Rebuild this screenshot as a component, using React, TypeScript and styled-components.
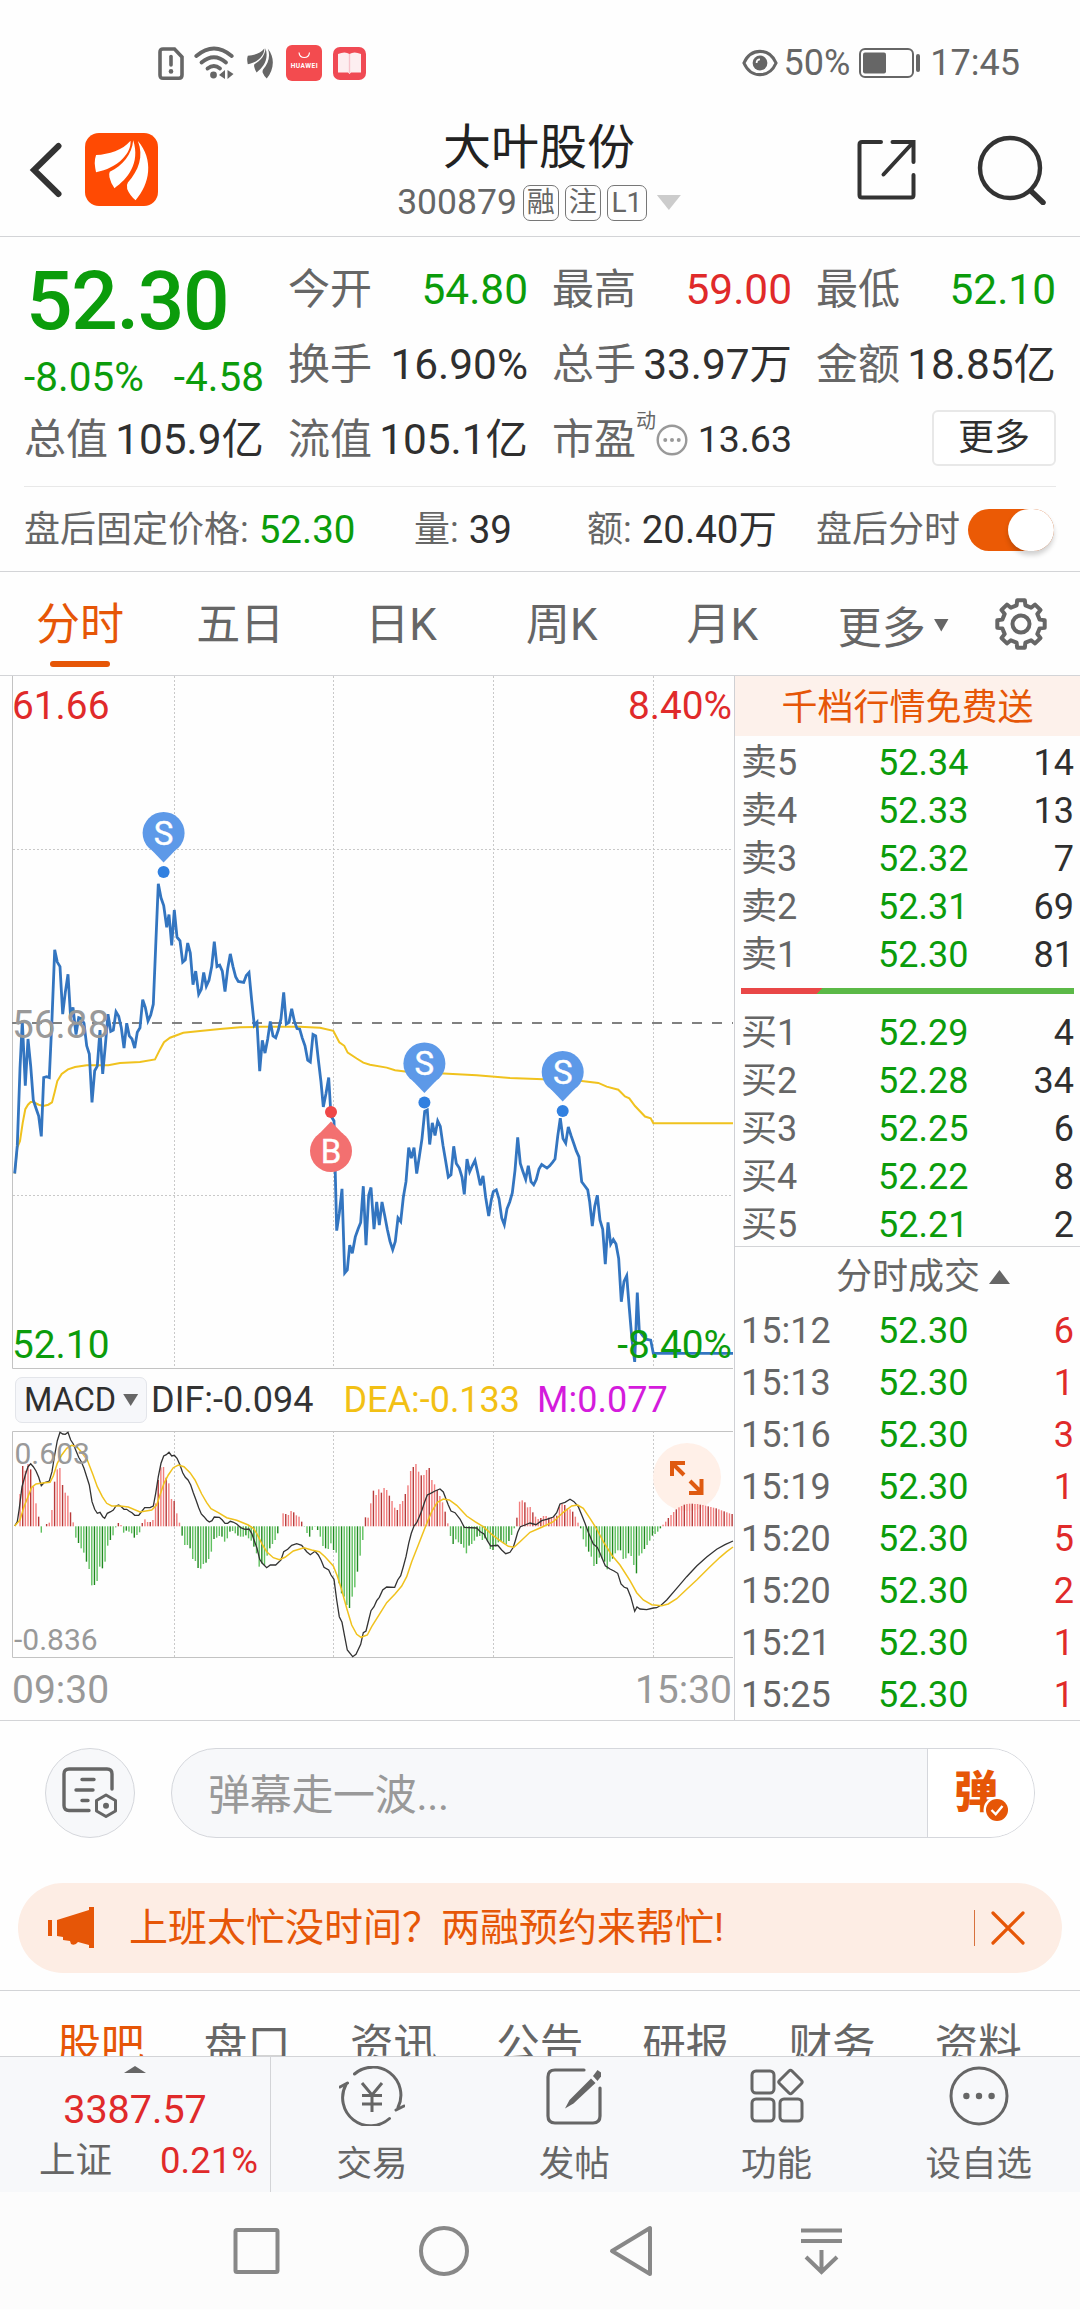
import React from "react";
import styled, { createGlobalStyle } from "styled-components";

const FONT = `Roboto, "Noto Sans CJK SC", "Noto Sans", sans-serif`;
const C = {
  green: "#0b9c0b",
  red: "#e02a2a",
  orange: "#e65607",
  gray: "#666666",
  light: "#999999",
  dark: "#2f2f2f",
  line: "#d3d4d7",
  blue: "#3375c0",
  yellow: "#f0c21e",
};

const GlobalStyle = createGlobalStyle`
  html, body { margin: 0; padding: 0; background: #fff; }
  body { width: 1080px; height: 2310px; overflow: hidden; }
  * { box-sizing: border-box; }
`;

const Screen = styled.div`
  width: 1080px;
  height: 2310px;
  overflow: hidden;
  display: flex;
  flex-direction: column;
  background: #fefefe;
  font-family: ${FONT};
  color: ${C.dark};
  white-space: nowrap;
  & > * {
    flex-shrink: 0;
  }
`;

/* ---------- status bar ---------- */
const StatusBar = styled.div`
  height: 119px;
  padding: 7px 60px 0 158px;
  display: flex;
  align-items: center;
  justify-content: space-between;
  color: ${C.gray};
  font-size: 36px;
  line-height: 40px;
`;
const StatusIcons = styled.div`
  display: flex;
  align-items: center;
`;
const StatusInfo = styled.div`
  display: flex;
  align-items: center;
  height: 40px;
`;
const Gap = styled.span<{ $w: number }>`
  width: ${(p) => p.$w}px;
  flex: none;
`;

/* ---------- header ---------- */
const Header = styled.div`
  height: 118px;
  border-bottom: 1px solid ${C.line};
  display: grid;
  grid-template-columns: 1fr auto 1fr;
  padding: 0 33px 0 29px;
`;
const HeaderSide = styled.div<{ $end?: boolean }>`
  display: flex;
  height: 101px;
  align-items: center;
  justify-content: ${(p) => (p.$end ? "flex-end" : "flex-start")};
`;
const TitleBlock = styled.div`
  display: flex;
  flex-direction: column;
  align-items: center;
  padding-left: 2px;
`;
const Title = styled.div`
  font-size: 48px;
  line-height: 57px;
  color: #222;
`;
const SubTitle = styled.div`
  height: 53px;
  display: flex;
  align-items: center;
  font-size: 35.5px;
  line-height: 53px;
  color: ${C.gray};
`;
const Tag = styled.span<{ $w?: number }>`
  width: ${(p) => p.$w || 36}px;
  height: 36px;
  margin-left: 6px;
  border: 1.5px solid #777;
  border-radius: 7px;
  font-size: 28px;
  line-height: 34px;
  text-align: center;
`;
const Triangle = styled.span<{ $w: number; $h: number; $color: string; $up?: boolean; $ml?: number }>`
  flex: none;
  width: ${(p) => p.$w}px;
  height: ${(p) => p.$h}px;
  margin-left: ${(p) => p.$ml || 0}px;
  background: ${(p) => p.$color};
  clip-path: ${(p) => (p.$up ? "polygon(50% 0, 100% 100%, 0 100%)" : "polygon(0 0, 100% 0, 50% 100%)")};
`;

/* ---------- quote ---------- */
const Quote = styled.div`
  height: 250px;
  margin: 0 24px;
  padding-top: 15px;
  border-bottom: 1px solid #e8e8e8;
  display: grid;
  grid-template-columns: repeat(4, 240px);
  grid-template-rows: repeat(3, 75px);
  column-gap: 24px;
`;
const PriceCell = styled.div`
  grid-row: span 2;
  color: ${C.green};
`;
const BigPrice = styled.div`
  padding-left: 2px;
  font-size: 82px;
  font-weight: 500;
  line-height: 98px;
  letter-spacing: -1.4px;
`;
const Change = styled.div`
  display: flex;
  justify-content: space-between;
  font-size: 40.5px;
  line-height: 54px;
`;
const Cell = styled.div`
  display: flex;
  align-items: center;
  justify-content: space-between;
  font-size: 42px;
  line-height: 75px;
`;
const Label = styled.span`
  color: ${C.gray};
`;
const Value = styled.span<{ $color?: string; $size?: number }>`
  color: ${(p) => p.$color || C.dark};
  font-size: ${(p) => (p.$size ? `${p.$size}px` : "inherit")};
`;
const PeLabel = styled.span`
  display: flex;
  align-items: center;
  color: ${C.gray};
`;
const PeSup = styled.span`
  margin: 0 0 38px 0;
  font-size: 20px;
  line-height: 24px;
`;
const MoreButton = styled.button`
  width: 124px;
  height: 56px;
  margin: 0 0 3px auto;
  padding: 0;
  border: 2px solid #e8e8e8;
  border-radius: 6px;
  background: #fff;
  font-family: inherit;
  font-size: 36px;
  line-height: 52px;
  color: ${C.dark};
`;
const AfterHours = styled.div`
  height: 85px;
  border-bottom: 1px solid ${C.line};
  padding: 1px 24px 0;
  display: grid;
  grid-template-columns: 390px 173px 229px 1fr;
  align-items: center;
  font-size: 36px;
  line-height: 82px;
`;
const AfterItem = styled.div<{ $gap?: number }>`
  display: flex;
  align-items: center;
  gap: ${(p) => p.$gap || 10}px;
`;
const Toggle = styled.span`
  width: 86px;
  height: 42px;
  border-radius: 21px;
  background: linear-gradient(90deg, #eb5a05 55%, #c94d05);
  display: flex;
  justify-content: flex-end;
`;
const Knob = styled.span`
  width: 46px;
  height: 42px;
  border-radius: 21px;
  background: #fff;
  box-shadow: 0 4px 5px rgba(0, 0, 0, 0.18);
`;

/* ---------- period tabs ---------- */
const PeriodTabs = styled.div`
  height: 104px;
  border-bottom: 1px solid ${C.line};
  display: flex;
  font-size: 44px;
  color: ${C.gray};
`;
const PeriodTab = styled.div<{ $active?: boolean }>`
  flex: none;
  width: ${(p) => (p.$active ? 160 : 160.7)}px;
  display: flex;
  flex-direction: column;
  align-items: center;
  line-height: 88px;
  padding-top: 9px;
  color: ${(p) => (p.$active ? C.orange : "inherit")};
`;
const Underline = styled.span`
  width: 60px;
  height: 6px;
  margin-top: -8px;
  border-radius: 3px;
  background: ${C.orange};
`;
const PeriodMore = styled.div`
  flex: none;
  display: flex;
  align-items: center;
  margin-left: 35px;
  padding-top: 3px;
  width: 157px;
`;
const PeriodSettings = styled.div`
  display: flex;
  align-items: center;
`;

/* ---------- chart + order book ---------- */
const Main = styled.div`
  height: 1045px;
  border-bottom: 1px solid ${C.line};
  display: flex;
  overflow: hidden;
`;
const ChartPane = styled.div`
  width: 735px;
  border-right: 1px solid #cfd0d4;
  display: flex;
  flex-direction: column;
`;
const Plot = styled.svg`
  display: block;
  flex: none;
  font-family: ${FONT};
`;
const IndicatorBar = styled.div`
  height: 62px;
  padding: 0 0 0 15px;
  display: flex;
  align-items: center;
  font-size: 36px;
  line-height: 42px;
`;
const IndicatorButton = styled.div`
  width: 132px;
  height: 46px;
  border: 1px solid #e3e5ea;
  border-radius: 7px;
  background: #f6f7fa;
  padding-left: 8px;
  display: flex;
  align-items: center;
  font-size: 32.5px;
`;
const IndicatorValue = styled.span<{ $color: string; $ml: number }>`
  margin-left: ${(p) => p.$ml}px;
  color: ${(p) => p.$color};
`;
const TimeAxis = styled.div`
  height: 62px;
  padding: 0 2px 0 12px;
  display: flex;
  justify-content: space-between;
  font-size: 39px;
  line-height: 65px;
  color: ${C.light};
`;
const Book = styled.div`
  flex: 1;
  display: flex;
  flex-direction: column;
  font-size: 36px;
  & > * {
    flex-shrink: 0;
  }
`;
const BookBanner = styled.div`
  height: 60px;
  background: #fdf1eb;
  color: ${C.orange};
  text-align: center;
  line-height: 65px;
`;
const BookRows = styled.div<{ $pt: number }>`
  padding-top: ${(p) => p.$pt}px;
`;
const BookRow = styled.div<{ $h: number }>`
  height: ${(p) => p.$h}px;
  line-height: ${(p) => p.$h}px;
  padding: 0 6px;
  display: grid;
  grid-template-columns: 137px 1fr auto;
`;
const RatioBar = styled.div`
  margin: 9px 6px 15px;
  height: 6px;
  background: linear-gradient(135deg, #e94747 0, #e94747 57.5px, #5bb947 58px);
`;
const TradesHead = styled.div`
  height: 59px;
  margin-top: -3px;
  border-top: 1px solid ${C.line};
  padding: 2px 0 0 101px;
  display: flex;
  align-items: center;
  line-height: 56px;
  color: ${C.gray};
`;

/* ---------- danmaku + banner ---------- */
const DanmakuRow = styled.div`
  padding: 27px 45px 0;
  display: flex;
  gap: 36px;
`;
const RoundButton = styled.div`
  width: 90px;
  height: 90px;
  border: 1px solid #d5d7dc;
  border-radius: 45px;
  background: #f7f8fa;
  display: flex;
  align-items: center;
  justify-content: center;
`;
const DanmakuInput = styled.div`
  width: 864px;
  height: 90px;
  border: 1px solid #d5d7dc;
  border-radius: 45px;
  background: #f7f8fa;
  overflow: hidden;
  display: flex;
`;
const Placeholder = styled.div`
  flex: 1;
  padding-left: 36px;
  font-size: 42px;
  letter-spacing: -0.3px;
  line-height: 93px;
  color: ${C.light};
`;
const DanmakuToggle = styled.div`
  position: relative;
  width: 107px;
  border-left: 1px solid #d5d7dc;
  background: #fff;
  padding-left: 26px;
  font-size: 44px;
  font-weight: 900;
  line-height: 88px;
  color: ${C.orange};
`;
const CheckBadge = styled.svg`
  position: absolute;
  left: 55px;
  top: 47px;
`;
const PromoBanner = styled.div`
  height: 90px;
  margin: 45px 18px 17px;
  padding: 0 37px 0 30px;
  border-radius: 45px;
  background: #fdede4;
  display: flex;
  align-items: center;
  font-size: 39px;
  line-height: 94px;
  color: ${C.orange};
`;
const PromoText = styled.span`
  flex: 1;
  margin-left: 33px;
`;
const PromoDivider = styled.span`
  width: 1px;
  height: 36px;
  background: #d8713d;
  margin-right: 16px;
`;

/* ---------- section tabs ---------- */
const SectionTabs = styled.div`
  height: 66px;
  overflow: hidden;
  border-top: 1px solid ${C.line};
  padding: 19px 28px 0;
  display: grid;
  grid-template-columns: repeat(7, 146.2px);
  font-size: 43.5px;
  line-height: 72px;
  text-align: center;
  color: ${C.gray};
`;
const SectionTab = styled.span<{ $active?: boolean }>`
  color: ${(p) => (p.$active ? C.orange : "inherit")};
`;

/* ---------- bottom bar ---------- */
const BottomBar = styled.div`
  height: 136px;
  border-top: 1px solid ${C.line};
  background: #f7f8fa;
  display: grid;
  grid-template-columns: 271px repeat(4, 1fr);
`;
const IndexCell = styled.div`
  border-right: 1px solid ${C.line};
  padding-top: 9px;
  display: flex;
  flex-direction: column;
  align-items: center;
  color: ${C.red};
`;
const IndexValue = styled.div`
  margin-top: 11px;
  font-size: 39.5px;
  line-height: 52px;
`;
const IndexRow = styled.div`
  width: 100%;
  padding: 0 12px 0 39px;
  display: flex;
  justify-content: space-between;
  font-size: 36.5px;
  line-height: 49px;
`;
const Action = styled.div`
  display: flex;
  flex-direction: column;
  align-items: center;
  padding-top: 9px;
  font-size: 35.5px;
  line-height: 76px;
  color: ${C.gray};
`;
const SystemNav = styled.div`
  height: 117px;
  padding: 0 228px 0 227px;
  background: #fcfcfc;
  display: flex;
  align-items: center;
  justify-content: space-between;
`;

/* ---------- icons ---------- */
const feathers = [
  "M136 23 C112 52 72 63 33 66 Q29 78 29 90 Q30 104 33 117 C64 110 92 99 113 76 C128 60 137 44 136 23Z",
  "M144 22 C140 65 113 97 74 116 Q71 122 73 132 Q77 150 88 165 C126 138 166 92 144 22Z",
  "M158 24 C176 70 160 112 128 148 Q123 156 126 167 Q133 185 151 201 C194 152 206 80 158 24Z",
];
const AppLogo = () => (
  <svg width="73" height="73" viewBox="0 0 218 218">
    <rect width="218" height="218" rx="42" fill="#ff4a03" />
    {feathers.map((d) => (
      <path key={d} d={d} fill="#fff" />
    ))}
  </svg>
);
const SimIcon = () => (
  <svg width="26" height="33" viewBox="0 0 26 33" fill="none" stroke={C.gray} strokeWidth="3.6">
    <path d="M5 2 H16.5 L24 10 V28 Q24 31.2 21 31.2 H5 Q2 31.2 2 28 V5 Q2 2 5 2Z" />
    <path d="M13 9.5 V18" strokeLinecap="round" />
    <circle cx="13" cy="24.4" r="2.3" fill={C.gray} stroke="none" />
  </svg>
);
const WifiIcon = () => (
  <svg width="40" height="34" viewBox="0 0 40 34" fill="none" stroke={C.gray} strokeWidth="3.8" strokeLinecap="round">
    <path d="M2.3 10 Q20 -5 37.7 10" />
    <path d="M7.5 16.5 Q20 6 32 16.5" />
    <path d="M13.5 22.5 Q20 17.5 26 22.5" />
    <circle cx="19.5" cy="29" r="3.4" fill={C.gray} stroke="none" />
    <path d="M31 24 V33 L25 29Z M33.5 33 V24 L39.5 28Z" fill={C.gray} stroke="none" />
  </svg>
);
const FeatherIcon = () => (
  <svg width="26" height="31" viewBox="28 20 162 184" preserveAspectRatio="none">
    {feathers.map((d) => (
      <path key={d} d={d} fill={C.gray} />
    ))}
  </svg>
);
const StoreIcon = () => (
  <svg width="36" height="36" viewBox="0 0 36 36">
    <rect width="36" height="36" rx="6" fill="#f34b4f" />
    <path d="M13 7.5 Q13.5 12.5 18.3 12.5 Q23 12.5 23.5 7.5" fill="none" stroke="#fff" strokeWidth="1.2" />
    <text x="18.2" y="23" fill="#fff" fontSize="6.6" fontWeight="700" textAnchor="middle" textLength="27" fontFamily="Roboto">
      HUAWEI
    </text>
  </svg>
);
const BookIcon = () => (
  <svg width="33" height="33" viewBox="0 0 33 33">
    <rect width="33" height="33" rx="7" fill="#f04a54" />
    <path d="M5 7 Q12 4 16.5 7 Q21 4 28 7 V25.5 H18 L16.5 27 L15 25.5 H5Z" fill="#fdeef0" />
    <path d="M16.5 7 V26" stroke="#f6c4cc" strokeWidth="1.4" />
  </svg>
);
const EyeIcon = () => (
  <svg width="36" height="28" viewBox="0 0 37 28" fill="none" stroke={C.gray} strokeWidth="3.2">
    <path d="M2 14 C9 -2 28 -2 35 14 C28 30 9 30 2 14Z" />
    <circle cx="18.5" cy="14" r="7.6" fill={C.gray} stroke="none" />
    <path d="M15 14 Q15 10.5 18.5 10.3" stroke="#fff" strokeWidth="1.8" />
  </svg>
);
const BatteryIcon = () => (
  <svg width="61" height="30" viewBox="0 0 61 30">
    <rect x="1" y="1" width="53" height="28" rx="5" fill="none" stroke={C.gray} strokeWidth="2" />
    <rect x="4" y="4.5" width="23" height="21" rx="2" fill={C.gray} />
    <rect x="57" y="6" width="4" height="18" rx="2" fill={C.gray} />
  </svg>
);
const BackIcon = () => (
  <svg width="34" height="56" viewBox="0 0 34 56" fill="none" stroke="#333" strokeWidth="6" strokeLinecap="round">
    <path d="M29.5 4 L5 28 L29.5 52" />
  </svg>
);
const ShareIcon = () => (
  <svg width="60" height="62" viewBox="0 0 60 62" fill="none" stroke="#333" strokeWidth="4" strokeLinecap="round">
    <path d="M24 3 H5 Q2.5 3 2.5 5.5 V56 Q2.5 58.5 5 58.5 H54 Q56.5 58.5 56.5 56 V36" />
    <path d="M35.5 3 H56.5 V23 M56 3.5 L26.5 35.5" />
  </svg>
);
const SearchIcon = () => (
  <svg width="70" height="70" viewBox="0 0 70 70" fill="none" stroke="#333" strokeWidth="4.4" strokeLinecap="round">
    <circle cx="33" cy="33" r="30" />
    <path d="M54 56 L66 67.5" strokeWidth="5.5" />
  </svg>
);
const DotsCircle = ({ size, sw, r, color }: { size: number; sw: number; r: number; color: string }) => (
  <svg width={size} height={size} viewBox={`0 0 ${size} ${size}`}>
    <circle cx={size / 2} cy={size / 2} r={size / 2 - sw / 2 - 0.5} fill="none" stroke={color} strokeWidth={sw} />
    {[-1, 0, 1].map((k) => (
      <circle key={k} cx={size / 2 + k * size * 0.21} cy={size / 2} r={r} fill={color} />
    ))}
  </svg>
);
const gearPath = (() => {
  const pts: string[] = [];
  for (let i = 0; i < 8; i++) {
    const a = (i * Math.PI) / 4 - Math.PI / 2;
    [
      [-0.23, 19.2],
      [-0.16, 24.0],
      [0.16, 24.0],
      [0.23, 19.2],
    ].forEach(([d, r]) => pts.push(`${(26 + r * Math.cos(a + d)).toFixed(2)} ${(26 + r * Math.sin(a + d)).toFixed(2)}`));
  }
  return `M${pts.join("L")}Z`;
})();
const GearIcon = () => (
  <svg width="52" height="52" viewBox="0 0 52 52" fill="none" stroke={C.gray} strokeWidth="4" strokeLinejoin="round">
    <path d={gearPath} />
    <circle cx="26" cy="26" r="8.5" />
  </svg>
);
const ListSettingIcon = () => (
  <svg width="56" height="52" viewBox="0 0 56 52" fill="none" stroke={C.gray} strokeWidth="3.4" strokeLinecap="round">
    <path d="M27 43.5 H7 Q2 43.5 2 38.5 V7 Q2 2 7 2 H45 Q50 2 50 7 V22" />
    <path d="M20 12.5 H32 M14 23 H31 M20 33.5 H26" />
    <path d="M44 28 L53.5 33.5 V44 L44 49.5 L34.5 44 V33.5Z" strokeLinejoin="round" strokeWidth="3" />
    <circle cx="44" cy="38.7" r="3" fill={C.gray} stroke="none" />
  </svg>
);
const MegaphoneIcon = () => (
  <svg width="48" height="42" viewBox="0 0 48 42" fill={C.orange}>
    <rect x="0" y="13" width="4" height="16" />
    <path d="M9 13 L41 3 V0 H46 V41 H41 V38 L30 35 Q27 39 23 37 L22 34 L15 33 V30 L9 29Z" />
  </svg>
);
const CloseIcon = () => (
  <svg width="34" height="34" viewBox="0 0 34 34" stroke={C.orange} strokeWidth="3.2" strokeLinecap="round">
    <path d="M2 2 L32 32 M32 2 L2 32" />
  </svg>
);
const TradeIcon = () => (
  <svg width="66" height="60" viewBox="0 0 66 60" fill="none" stroke={C.gray} strokeWidth="3">
    <path d="M15.5 8 A28 28 0 0 1 59 41.5" strokeLinecap="round" />
    <path d="M50.5 52.5 A28 28 0 0 1 7 18.5" strokeLinecap="round" />
    <path d="M57 44 L65 40 M1 21 L8.5 17" strokeLinecap="round" />
    <path d="M23 17 L33 29 L43 17 M33 29 V46 M23 29.5 H43 M23 38 H43" />
  </svg>
);
const PostIcon = () => (
  <svg width="56" height="60" viewBox="0 0 56 60" fill="none" stroke={C.gray} strokeWidth="3.2">
    <path d="M38 4 H9 Q2 4 2 11 V50 Q2 57 9 57 H47 Q54 57 54 50 V22" strokeLinecap="round" />
    <path d="M45 12.500 L49.500 17 L27.500 37.500 L19 42.500 L23.500 34Z" fill={C.gray} stroke="none" />
    <path d="M47 10 L51.5 4 L55 6.5 L55 10.500 L51.5 15Z" fill={C.gray} stroke="none" />
  </svg>
);
const AppsIcon = () => (
  <svg width="54" height="60" viewBox="0 0 54 60" fill="none" stroke={C.gray} strokeWidth="3">
    <rect x="2" y="5" width="22" height="22" rx="4" />
    <rect x="2" y="33" width="22" height="22" rx="4" />
    <rect x="30" y="33" width="22" height="22" rx="4" />
    <path d="M39 5 Q40.5 3.5 42 5 L51.5 14.5 Q53 16 51.5 17.5 L42 27 Q40.5 28.5 39 27 L29.5 17.5 Q28 16 29.5 14.5Z" />
  </svg>
);

/* ---------- chart data (plot units: 3 per pixel across) ---------- */
const price = [
  44, 1112, 52, 1050, 60, 880, 67, 775, 76, 918, 84, 815, 92, 875, 100, 950, 108, 968, 116, 985, 124, 1030, 131, 900, 140, 898,
  148, 900, 156, 770, 164, 618, 172, 645, 180, 655, 188, 760, 196, 712, 204, 672, 212, 770, 219, 745, 228, 805, 236, 768, 244,
  770, 252, 780, 260, 830, 268, 848, 276, 955, 284, 885, 292, 875, 300, 795, 308, 892, 316, 830, 324, 760, 332, 798, 340, 795,
  348, 755, 356, 765, 364, 790, 372, 835, 380, 780, 388, 808, 396, 815, 404, 835, 412, 800, 420, 790, 428, 728, 436, 745, 444,
  775, 452, 762, 460, 738, 467, 610, 475, 472, 483, 503, 491, 520, 500, 568, 507, 540, 515, 608, 523, 530, 531, 590, 540, 598,
  548, 645, 556, 640, 563, 603, 571, 625, 579, 695, 587, 665, 596, 716, 604, 705, 611, 668, 619, 698, 627, 685, 635, 655, 643,
  600, 651, 655, 659, 652, 667, 665, 675, 710, 683, 660, 691, 627, 699, 655, 707, 678, 715, 688, 731, 690, 739, 675, 747, 668,
  755, 730, 763, 785, 771, 778, 779, 886, 787, 818, 795, 846, 803, 815, 811, 776, 819, 808, 827, 812, 835, 795, 843, 770, 851,
  712, 859, 782, 867, 778, 875, 748, 883, 775, 891, 792, 899, 793, 907, 813, 915, 830, 923, 862, 931, 866, 939, 805, 947, 808,
  955, 860, 963, 910, 970, 965, 978, 935, 986, 900, 993, 985, 1002, 996, 1010, 1238, 1018, 1200, 1026, 1146, 1034, 1332, 1042,
  1325, 1049, 1270, 1057, 1288, 1066, 1252, 1074, 1235, 1082, 1220, 1090, 1140, 1098, 1270, 1106, 1160, 1113, 1143, 1122, 1235,
  1130, 1175, 1138, 1226, 1146, 1175, 1154, 1205, 1162, 1235, 1170, 1262, 1178, 1280, 1186, 1262, 1194, 1210, 1202, 1218, 1210,
  1165, 1218, 1130, 1226, 1055, 1234, 1078, 1242, 1055, 1250, 1112, 1258, 1075, 1266, 1035, 1274, 975, 1282, 972, 1289, 1048,
  1297, 1000, 1305, 1028, 1313, 996, 1321, 1008, 1329, 1050, 1337, 1085, 1345, 1120, 1353, 1115, 1361, 1052, 1369, 1090, 1378,
  1100, 1386, 1120, 1393, 1158, 1401, 1080, 1409, 1108, 1417, 1095, 1425, 1083, 1433, 1110, 1441, 1138, 1449, 1117, 1457, 1165,
  1466, 1206, 1474, 1170, 1480, 1152, 1489, 1148, 1497, 1168, 1505, 1210, 1513, 1225, 1521, 1190, 1529, 1175, 1537, 1155, 1545,
  1105, 1553, 1032, 1561, 1090, 1569, 1108, 1577, 1125, 1585, 1095, 1593, 1130, 1601, 1137, 1609, 1125, 1617, 1102, 1625, 1092,
  1641, 1100, 1649, 1095, 1657, 1088, 1665, 1080, 1673, 1030, 1681, 990, 1689, 1035, 1697, 1045, 1705, 1009, 1713, 1028, 1721,
  1045, 1729, 1062, 1737, 1075, 1745, 1130, 1753, 1138, 1763, 1148, 1769, 1175, 1777, 1228, 1784, 1185, 1792, 1160, 1800, 1215,
  1808, 1235, 1816, 1312, 1824, 1220, 1832, 1268, 1840, 1258, 1848, 1268, 1856, 1300, 1864, 1395, 1872, 1350, 1880, 1338, 1888,
  1410, 1896, 1480, 1904, 1528, 1912, 1375, 1918, 1460, 1928, 1470, 1938, 1478, 1952, 1480, 1960, 1509, 2199, 1509,
];
const average = [
  44, 1112, 52, 1055, 60, 1040, 68, 1000, 76, 970, 84, 960, 92, 954, 100, 954, 116, 960, 130, 963, 145, 960, 156, 955, 164, 932,
  172, 908, 185, 892, 204, 882, 225, 877, 260, 873, 325, 873, 360, 868, 420, 866, 465, 860, 480, 838, 492, 822, 510, 812, 550,
  801, 600, 797, 660, 793, 720, 789, 780, 788, 900, 788, 960, 790, 1000, 797, 1018, 822, 1033, 830, 1043, 845, 1070, 858, 1090,
  867, 1110, 872, 1160, 878, 1185, 884, 1240, 889, 1330, 891, 1430, 895, 1530, 901, 1630, 904, 1680, 906, 1745, 908, 1795, 912,
  1820, 920, 1855, 927, 1875, 942, 1888, 946, 1905, 963, 1935, 986, 1952, 990, 1960, 1001, 2199, 1001,
];
const dif = [
  44, 468, 52, 455, 58, 415, 66, 350, 76, 315, 84, 290, 92, 281, 100, 290, 108, 303, 116, 322, 124, 347, 132, 338, 148, 333,
  156, 305, 164, 255, 172, 212, 180, 187, 188, 192, 196, 193, 204, 187, 212, 210, 220, 222, 228, 242, 236, 262, 244, 275, 252,
  295, 260, 320, 268, 345, 276, 395, 284, 418, 292, 430, 300, 427, 308, 440, 314, 445, 322, 430, 332, 425, 340, 420, 348, 408,
  356, 405, 364, 410, 372, 418, 380, 418, 388, 424, 396, 428, 404, 436, 416, 436, 424, 426, 434, 413, 450, 413, 460, 408, 467,
  370, 475, 320, 483, 280, 491, 258, 499, 254, 507, 247, 515, 258, 523, 256, 531, 265, 540, 285, 548, 308, 556, 322, 564, 330,
  572, 345, 580, 368, 588, 390, 596, 413, 604, 432, 612, 440, 620, 450, 628, 456, 636, 452, 643, 441, 658, 442, 667, 450, 675,
  460, 683, 460, 691, 454, 699, 456, 710, 462, 722, 473, 735, 478, 747, 477, 755, 490, 763, 512, 771, 535, 779, 568, 787, 580,
  800, 593, 811, 585, 827, 585, 843, 570, 851, 545, 863, 538, 875, 526, 890, 521, 905, 526, 920, 545, 931, 554, 945, 544, 955,
  555, 963, 570, 972, 592, 986, 600, 993, 615, 1002, 628, 1010, 690, 1018, 740, 1026, 757, 1034, 800, 1042, 840, 1058, 860,
  1068, 853, 1082, 823, 1090, 788, 1098, 783, 1106, 750, 1113, 722, 1122, 710, 1130, 692, 1138, 682, 1148, 660, 1160, 651, 1184,
  652, 1193, 630, 1202, 617, 1210, 590, 1218, 560, 1226, 520, 1234, 490, 1242, 468, 1250, 458, 1258, 440, 1266, 420, 1274, 395,
  1282, 375, 1292, 370, 1305, 363, 1320, 357, 1330, 366, 1337, 385, 1345, 405, 1353, 423, 1365, 428, 1380, 447, 1393, 472, 1430,
  474, 1441, 485, 1452, 492, 1462, 512, 1472, 528, 1493, 526, 1505, 540, 1517, 551, 1530, 547, 1540, 532, 1546, 512, 1553, 487,
  1561, 470, 1575, 465, 1590, 459, 1608, 464, 1625, 452, 1640, 448, 1660, 441, 1670, 428, 1680, 402, 1695, 397, 1710, 388, 1722,
  395, 1735, 410, 1745, 435, 1755, 460, 1765, 487, 1780, 522, 1792, 532, 1800, 550, 1816, 587, 1830, 597, 1842, 603, 1853, 610,
  1863, 642, 1873, 652, 1882, 655, 1892, 680, 1904, 724, 1911, 711, 1920, 717, 1940, 719, 1960, 714, 1970, 713, 1984, 705, 2000,
  690, 2030, 655, 2060, 620, 2090, 588, 2120, 561, 2150, 538, 2175, 524, 2199, 513,
];
const dea = [
  44, 468, 60, 450, 72, 410, 84, 380, 95, 352, 108, 342, 128, 339, 150, 337, 160, 318, 172, 280, 185, 255, 200, 235, 215, 226,
  230, 230, 245, 247, 262, 270, 278, 312, 292, 350, 307, 380, 320, 400, 335, 408, 360, 408, 385, 411, 420, 426, 455, 420, 470,
  405, 480, 375, 492, 340, 505, 315, 520, 293, 535, 285, 552, 290, 570, 308, 585, 330, 605, 372, 620, 398, 633, 416, 655, 428,
  680, 443, 710, 451, 745, 465, 760, 475, 770, 490, 785, 520, 800, 545, 820, 563, 838, 569, 855, 562, 880, 543, 912, 533, 935,
  540, 958, 545, 975, 560, 1000, 588, 1012, 618, 1025, 660, 1040, 715, 1055, 765, 1070, 793, 1083, 802, 1102, 795, 1115, 770,
  1140, 730, 1160, 698, 1185, 672, 1205, 648, 1220, 620, 1235, 575, 1255, 525, 1275, 473, 1295, 425, 1312, 397, 1330, 387, 1348,
  390, 1370, 406, 1400, 438, 1425, 455, 1450, 470, 1475, 493, 1500, 512, 1525, 529, 1542, 532, 1560, 515, 1590, 487, 1625, 472,
  1660, 455, 1690, 427, 1715, 408, 1733, 405, 1750, 415, 1770, 445, 1790, 477, 1810, 515, 1835, 555, 1860, 585, 1890, 632, 1910,
  668, 1930, 690, 1955, 704, 1985, 707, 2005, 702, 2030, 686, 2060, 658, 2090, 630, 2130, 590, 2160, 562, 2180, 545, 2199, 531,
];
/* histogram tops, one bar every eight units starting at 60 */
const bars = [
  372, 288, 302, 282, 298, 350, 400, 440, 488, 469, 462, 458, 420, 335, 298, 294, 345, 368, 377, 427, 457, 503, 519, 535, 548,
  575, 597, 646, 645, 633, 590, 595, 575, 527, 510, 496, 472, 459, 465, 488, 482, 485, 490, 503, 495, 487, 459, 448, 456, 456,
  450, 400, 330, 292, 291, 323, 340, 387, 393, 430, 458, 497, 525, 525, 535, 567, 573, 594, 596, 582, 578, 567, 545, 507, 503,
  498, 500, 515, 505, 485, 483, 490, 497, 500, 500, 496, 505, 512, 530, 550, 590, 580, 585, 557, 535, 522, 510, 490, 469, 430,
  432, 435, 423, 427, 436, 440, 455, 470, 489, 500, 480, 470, 480, 500, 528, 535, 537, 520, 540, 548, 640, 670, 680, 705, 714,
  680, 652, 605, 557, 510, 442, 443, 400, 362, 375, 358, 368, 354, 360, 377, 393, 413, 420, 402, 393, 372, 346, 303, 291, 282,
  305, 316, 315, 300, 294, 330, 343, 360, 378, 397, 425, 460, 498, 522, 508, 517, 522, 533, 550, 527, 522, 512, 500, 498, 510,
  505, 515, 537, 540, 530, 517, 513, 520, 523, 513, 495, 475, 443, 395, 391, 397, 412, 411, 427, 440, 447, 444, 438, 438, 443,
  442, 440, 437, 410, 402, 405, 415, 418, 425, 440, 458, 475, 508, 530, 545, 560, 588, 582, 563, 565, 575, 598, 575, 566, 550,
  541, 541, 567, 565, 550, 558, 585, 610, 557, 550, 537, 525, 512, 497, 492, 485, 475, 464, 455, 444, 435, 426, 418, 412, 408,
  404, 402, 401, 401, 402, 402, 404, 405, 407, 409, 411, 413, 415, 418, 421, 424, 427, 430, 432, 434,
];

const toPoints = (d: number[], y: (v: number) => number) => {
  const out: string[] = [];
  for (let i = 0; i < d.length; i += 2) out.push(`${(d[i] / 3).toFixed(1)},${y(d[i + 1]).toFixed(1)}`);
  return out.join(" ");
};
const priceY = (v: number) => v / 2.2085 - 6;
const macdY = (v: number) => v / 3 - 61;
const gridX = [174.5, 333.5, 493.5, 653.5];

type MarkerProps = { x: number; cy: number; dot: number; letter: "S" | "B" };
const Marker = ({ x, cy, dot, letter }: MarkerProps) => {
  const sell = letter === "S";
  const s = sell ? 1 : -1;
  return (
    <g>
      <circle cx={x} cy={cy} r="21" fill={sell ? "#5d99e8" : "#f37070"} />
      <path
        d={`M${x - 12} ${cy + s * 17} L${x} ${cy + s * 29.5} L${x + 12} ${cy + s * 17}Z`}
        fill={sell ? "#5d99e8" : "#f37070"}
      />
      <circle cx={x} cy={dot} r="6" fill={sell ? "#3180e0" : "#ef4747"} />
      <text x={x} y={cy + 11.5} fill="#fff" fontSize="33" textAnchor="middle" stroke="#fff" strokeWidth="0.4">
        {letter}
      </text>
    </g>
  );
};

const PriceChart = () => (
  <Plot width="734" height="693" viewBox="0 0 734 693">
    <g stroke="#c9c9c9" strokeDasharray="2 2">
      {gridX.map((x) => (
        <path key={x} d={`M${x} 0 V692`} />
      ))}
      <path d="M13 173.5 H733 M13 519.5 H733" />
    </g>
    <path d="M12.5 0 V692.5 H733" fill="none" stroke="#c3c3c3" />
    <path d="M12 347 H733" stroke="#808080" strokeWidth="2" strokeDasharray="10 10" />
    <polyline points={toPoints(average, priceY)} fill="none" stroke={C.yellow} strokeWidth="2" />
    <polyline points={toPoints(price, priceY)} fill="none" stroke={C.blue} strokeWidth="2.8" />
    <g fontSize="38.8">
      <text x="12" y="42.5" fill={C.red}>61.66</text>
      <text x="732" y="42.5" fill={C.red} textAnchor="end">8.40%</text>
      <text x="12" y="361.5" fill={C.light}>56.88</text>
      <text x="12" y="681.5" fill={C.green}>52.10</text>
      <text x="732" y="681.5" fill={C.green} textAnchor="end">-8.40%</text>
    </g>
    <Marker x={163.6} cy={157} dot={196} letter="S" />
    <Marker x={424.4} cy={387.5} dot={426.5} letter="S" />
    <Marker x={562.7} cy={396} dot={435} letter="S" />
    <Marker x={331} cy={475} dot={436} letter="B" />
  </Plot>
);

const MacdChart = () => (
  <Plot width="734" height="227" viewBox="0 0 734 227">
    <g stroke="#c9c9c9" strokeDasharray="2 2">
      {gridX.map((x) => (
        <path key={x} d={`M${x} 0 V226`} />
      ))}
    </g>
    <path d="M733 0.5 H12.5 V226.5 H733" fill="none" stroke="#c3c3c3" />
    <circle cx="687" cy="46" r="34" fill="#fff0e8" />
    <g fill="none" stroke="#df5a10" strokeWidth="4">
      <path d="M684 44 L672 32 M685 32 H672 V45" />
      <path d="M690 50 L702 62 M689 62 H701.5 V48" />
    </g>
    {bars.map((v, i) => {
      const x = 20 + i * 2.657;
      const up = v < 469;
      const dark = i % 3 === 1;
      return (
        <rect
          key={i}
          x={x - 0.65}
          y={Math.min(macdY(v), 95.3)}
          width={1.4}
          height={Math.abs(macdY(v) - 95.3)}
          fill={up ? (dark ? "#b83a3a" : "#f27e7e") : dark ? "#1f8a1f" : "#5fc05f"}
        />
      );
    })}
    <polyline points={toPoints(dif, macdY)} fill="none" stroke="#333" strokeWidth="1.3" />
    <polyline points={toPoints(dea, macdY)} fill="none" stroke={C.yellow} strokeWidth="1.5" />
    <g fontSize="30" fill={C.light}>
      <text x="14.5" y="33">0.603</text>
      <text x="14" y="218.5">-0.836</text>
    </g>
  </Plot>
);

const asks = [["卖5", "52.34", "14"], ["卖4", "52.33", "13"], ["卖3", "52.32", "7"], ["卖2", "52.31", "69"], ["卖1", "52.30", "81"]];
const bids = [["买1", "52.29", "4"], ["买2", "52.28", "34"], ["买3", "52.25", "6"], ["买4", "52.22", "8"], ["买5", "52.21", "2"]];
const trades = [["15:12", "6"], ["15:13", "1"], ["15:16", "3"], ["15:19", "1"], ["15:20", "5"], ["15:20", "2"], ["15:21", "1"], ["15:25", "1"]];

const BookLine = ({ cells, h, qty }: { cells: string[]; h: number; qty: string }) => (
  <BookRow $h={h}>
    <Label>{cells[0]}</Label>
    <Value $color={C.green}>{cells[1]}</Value>
    <Value $color={qty}>{cells[2]}</Value>
  </BookRow>
);

const Stat = ({ label, value, color }: { label: string; value: string; color?: string }) => (
  <Cell>
    <Label>{label}</Label>
    <Value $color={color} $size={42.4}>{value}</Value>
  </Cell>
);

export default function App() {
  return (
    <Screen>
      <GlobalStyle />
      <StatusBar>
        <StatusIcons>
          <SimIcon />
          <Gap $w={10} />
          <WifiIcon />
          <Gap $w={13} />
          <FeatherIcon />
          <Gap $w={13} />
          <StoreIcon />
          <Gap $w={11} />
          <BookIcon />
        </StatusIcons>
        <StatusInfo>
          <EyeIcon />
          <Gap $w={6} />
          50%
          <Gap $w={9} />
          <BatteryIcon />
          <Gap $w={10} />
          17:45
        </StatusInfo>
      </StatusBar>

      <Header>
        <HeaderSide>
          <BackIcon />
          <Gap $w={22} />
          <AppLogo />
        </HeaderSide>
        <TitleBlock>
          <Title>大叶股份</Title>
          <SubTitle>
            300879
            <Tag>融</Tag>
            <Tag>注</Tag>
            <Tag $w={40}>L1</Tag>
            <Triangle $w={24} $h={15} $color="#cccccc" $ml={10} />
          </SubTitle>
        </TitleBlock>
        <HeaderSide $end>
          <ShareIcon />
          <Gap $w={60} />
          <SearchIcon />
        </HeaderSide>
      </Header>

      <Quote>
        <PriceCell>
          <BigPrice>52.30</BigPrice>
          <Change>
            <span>-8.05%</span>
            <span>-4.58</span>
          </Change>
        </PriceCell>
        <Stat label="今开" value="54.80" color={C.green} />
        <Stat label="最高" value="59.00" color={C.red} />
        <Stat label="最低" value="52.10" color={C.green} />
        <Stat label="换手" value="16.90%" />
        <Stat label="总手" value="33.97万" />
        <Stat label="金额" value="18.85亿" />
        <Stat label="总值" value="105.9亿" />
        <Stat label="流值" value="105.1亿" />
        <Cell>
          <PeLabel>
            市盈
            <PeSup>动</PeSup>
            <DotsCircle size={32} sw={2.4} r={2} color="#999" />
          </PeLabel>
          <Value $size={37.5}>13.63</Value>
        </Cell>
        <Cell>
          <MoreButton>更多</MoreButton>
        </Cell>
      </Quote>

      <AfterHours>
        <AfterItem>
          <Label>盘后固定价格:</Label>
          <Value $color={C.green} $size={38.5}>52.30</Value>
        </AfterItem>
        <AfterItem>
          <Label>量:</Label>
          <Value $size={38.5}>39</Value>
        </AfterItem>
        <AfterItem>
          <Label>额:</Label>
          <Value $size={38.5}>20.40万</Value>
        </AfterItem>
        <AfterItem $gap={8}>
          <Label>盘后分时</Label>
          <Toggle>
            <Knob />
          </Toggle>
        </AfterItem>
      </AfterHours>

      <PeriodTabs>
        <PeriodTab $active>
          分时
          <Underline />
        </PeriodTab>
        <PeriodTab>五日</PeriodTab>
        <PeriodTab>日K</PeriodTab>
        <PeriodTab>周K</PeriodTab>
        <PeriodTab>月K</PeriodTab>
        <PeriodMore>
          更多
          <Triangle $w={15} $h={13} $color={C.gray} $ml={8} />
        </PeriodMore>
        <PeriodSettings>
          <GearIcon />
        </PeriodSettings>
      </PeriodTabs>

      <Main>
        <ChartPane>
          <PriceChart />
          <IndicatorBar>
            <IndicatorButton>
              MACD
              <Triangle $w={15} $h={12} $color={C.gray} $ml={7} />
            </IndicatorButton>
            <IndicatorValue $color="#333" $ml={4}>DIF:-0.094</IndicatorValue>
            <IndicatorValue $color="#f2c014" $ml={30}>DEA:-0.133</IndicatorValue>
            <IndicatorValue $color="#d41bdc" $ml={17}>M:0.077</IndicatorValue>
          </IndicatorBar>
          <MacdChart />
          <TimeAxis>
            <span>09:30</span>
            <span>15:30</span>
          </TimeAxis>
        </ChartPane>
        <Book>
          <BookBanner>千档行情免费送</BookBanner>
          <BookRows $pt={3}>
            {asks.map((r) => (
              <BookLine key={r[0]} cells={r} h={48} qty={C.dark} />
            ))}
          </BookRows>
          <RatioBar />
          <BookRows $pt={0}>
            {bids.map((r) => (
              <BookLine key={r[0]} cells={r} h={48} qty={C.dark} />
            ))}
          </BookRows>
          <TradesHead>
            分时成交
            <Triangle $w={21} $h={14} $color={C.gray} $up $ml={9} />
          </TradesHead>
          <BookRows $pt={0}>
            {trades.map((t, i) => (
              <BookLine key={i} cells={[t[0], "52.30", t[1]]} h={52.05} qty={C.red} />
            ))}
          </BookRows>
        </Book>
      </Main>

      <DanmakuRow>
        <RoundButton>
          <ListSettingIcon />
        </RoundButton>
        <DanmakuInput>
          <Placeholder>弹幕走一波...</Placeholder>
          <DanmakuToggle>
            弹
            <CheckBadge width="28" height="28" viewBox="0 0 28 28">
              <circle cx="14" cy="14" r="13.5" fill="#fff" />
              <circle cx="14" cy="14" r="11" fill={C.orange} />
              <path d="M8.5 14 L12.700 18.300 L19.500 10" fill="none" stroke="#fff" strokeWidth="2.4" />
            </CheckBadge>
          </DanmakuToggle>
        </DanmakuInput>
      </DanmakuRow>

      <PromoBanner>
        <MegaphoneIcon />
        <PromoText>上班太忙没时间？两融预约来帮忙!</PromoText>
        <PromoDivider />
        <CloseIcon />
      </PromoBanner>

      <SectionTabs>
        {["股吧", "盘口", "资讯", "公告", "研报", "财务", "资料"].map((t, i) => (
          <SectionTab key={t} $active={i === 0}>
            {t}
          </SectionTab>
        ))}
      </SectionTabs>

      <BottomBar>
        <IndexCell>
          <Triangle $w={22} $h={7} $color={C.gray} $up />
          <IndexValue>3387.57</IndexValue>
          <IndexRow>
            <Label>上证</Label>
            <span>0.21%</span>
          </IndexRow>
        </IndexCell>
        <Action>
          <TradeIcon />
          交易
        </Action>
        <Action>
          <PostIcon />
          发帖
        </Action>
        <Action>
          <AppsIcon />
          功能
        </Action>
        <Action>
          <DotsCircle size={60} sw={3} r={3.2} color={C.gray} />
          设自选
        </Action>
      </BottomBar>

      <SystemNav>
        <svg width="60" height="60" viewBox="0 0 60 60" fill="none" stroke="#888" strokeWidth="4">
          <rect x="8.5" y="9" width="42" height="42" rx="1.5" />
        </svg>
        <svg width="60" height="60" viewBox="0 0 60 60" fill="none" stroke="#888" strokeWidth="4">
          <circle cx="29" cy="30" r="23" />
        </svg>
        <svg width="60" height="60" viewBox="0 0 60 60" fill="none" stroke="#888" strokeWidth="4" strokeLinejoin="round">
          <path d="M46 7 V53 L8 30Z" />
        </svg>
        <svg width="60" height="60" viewBox="0 0 60 60" fill="none" stroke="#888" strokeWidth="4">
          <path d="M9 9.5 H50 M9 20 H50 M29.5 29 V50 M14 36 L29.5 51 L45 36" />
        </svg>
      </SystemNav>
    </Screen>
  );
}
